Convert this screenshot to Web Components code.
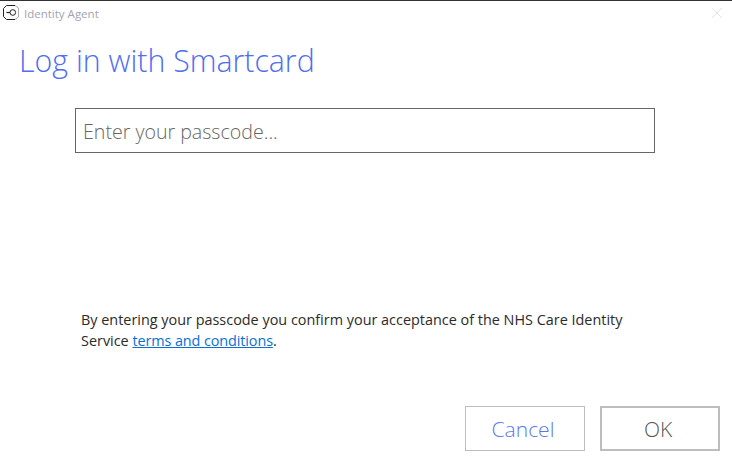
<!DOCTYPE html>
<html lang="en">
<head>
<meta charset="utf-8">
<title>Identity Agent</title>
<style>
  html, body { margin: 0; padding: 0; background: #fff; }
  a { color: #0a6fd8; text-decoration: underline; letter-spacing: -.1px; }
</style>
</head>
<body>
<login-dialog>
  <title-bar slot="bar">Identity Agent</title-bar>
  <span slot="heading">Log in with Smartcard</span>
  <passcode-box slot="field" placeholder="Enter your passcode..."></passcode-box>
  <span slot="notice">By entering your passcode you confirm your acceptance of the NHS Care Identity<br>Service <a href="#">terms and conditions</a>.</span>
  <dialog-button slot="actions" kind="cancel">Cancel</dialog-button>
  <dialog-button slot="actions" kind="ok">OK</dialog-button>
</login-dialog>

<script>
const FONT = '"Open Sans", "Noto Sans", "Liberation Sans", sans-serif';

class TitleBar extends HTMLElement {
  constructor() {
    super();
    this.attachShadow({ mode: 'open' });
    this.shadowRoot.innerHTML = `
      <style>
        :host {
          display: flex;
          align-items: center;
          height: 24px;
          padding: 0 10px 0 3px;
          font: 400 11.5px ${FONT};
          color: #a3a3b5;
        }
        svg { display: block; flex: none; }
        .label { margin-left: 5px; flex: 1; }
        .close { color: #e4e4e4; }
      </style>
      <svg width="16" height="16" viewBox="0 0 16 16" fill="none" stroke="#222" stroke-width="1">
        <path d="M12 .5H3.5L.5 3.5V11.5L3.5 14.5H12"/>
        <path stroke="#aaa" d="M12 .5L15.5 3V12L12 14.5"/>
        <circle cx="9.8" cy="7.5" r="2.8"/>
        <path stroke-width="1.2" d="M3.5 7.5H7"/>
      </svg>
      <span class="label"><slot></slot></span>
      <svg class="close" width="10" height="10" viewBox="0 0 10 10" stroke="currentColor" stroke-width="1">
        <path d="M0 0L10 10M10 0L0 10"/>
      </svg>
    `;
  }
}

class PasscodeBox extends HTMLElement {
  constructor() {
    super();
    this.attachShadow({ mode: 'open' });
  }

  connectedCallback() {
    this.shadowRoot.innerHTML = `
      <style>
        :host { display: block; }
        input {
          display: block;
          box-sizing: border-box;
          width: 580px;
          height: 45px;
          margin: 0;
          padding: 2px 7px 0;
          border: 1px solid #666;
          border-radius: 0;
          outline: none;
          background: #fff;
          font: 300 19.6px ${FONT};
        }
        input::placeholder { color: #666; opacity: 1; }
      </style>
      <input type="text" placeholder="${this.getAttribute('placeholder') || ''}">
    `;
  }
}

class DialogButton extends HTMLElement {
  constructor() {
    super();
    this.attachShadow({ mode: 'open' });
    this.shadowRoot.innerHTML = `
      <style>
        :host {
          display: flex;
          align-items: center;
          justify-content: center;
          box-sizing: border-box;
          width: 120px;
          height: 45px;
          padding-right: 4px;
          border: 1px solid #bdbdbd;
          font: 300 21px ${FONT};
          color: #5a78f0;
        }
        :host([kind="ok"]) {
          border-width: 2px;
          color: #555;
        }
      </style>
      <slot></slot>
    `;
  }
}

class LoginDialog extends HTMLElement {
  constructor() {
    super();
    this.attachShadow({ mode: 'open' });
    this.shadowRoot.innerHTML = `
      <style>
        :host {
          display: flex;
          flex-direction: column;
          box-sizing: border-box;
          width: 732px;
          height: 462px;
          border-top: 1px solid #333;
          background: #fff;
        }
        h1 {
          margin: 14px 0 0 19px;
          font: 300 30.3px/44px ${FONT};
          color: #4f6ef2;
        }
        .field { margin: 25px 0 0 75px; }
        .notice {
          margin: 156px 0 0 81px;
          font: 400 14.42px/21px ${FONT};
          color: #2b2b2b;
        }
        ::slotted(span[slot="notice"]) { display: block; }
        .actions {
          display: flex;
          justify-content: flex-end;
          gap: 15px;
          margin-top: auto;
          padding: 0 12px 11px 0;
        }
      </style>
      <slot name="bar"></slot>
      <h1><slot name="heading"></slot></h1>
      <div class="field"><slot name="field"></slot></div>
      <div class="notice"><slot name="notice"></slot></div>
      <div class="actions"><slot name="actions"></slot></div>
    `;
  }
}

customElements.define('title-bar', TitleBar);
customElements.define('passcode-box', PasscodeBox);
customElements.define('dialog-button', DialogButton);
customElements.define('login-dialog', LoginDialog);
</script>
</body>
</html>
